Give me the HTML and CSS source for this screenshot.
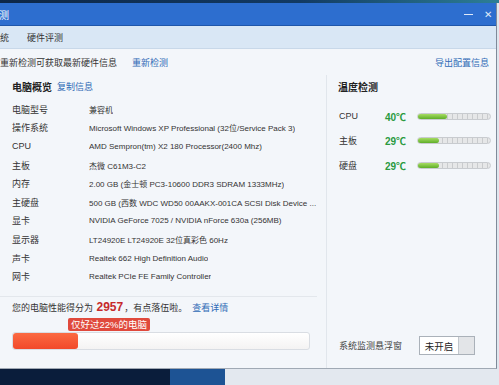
FILE: index.html
```html
<!DOCTYPE html>
<html lang="zh-CN">
<head>
    <meta charset="UTF-8">
    <title>硬件检测</title>
    <link rel="stylesheet" href="styles.css">
</head>
<body>
    <div class="screen">
        <div class="desktop-top"></div>
        <div class="window">
            <div class="titlebar">
                <span class="title">测</span>
                <span class="controls"><span class="min"></span><span class="close">✕</span></span>
            </div>
            <div class="menubar">
                <span class="tab">统</span>
                <span class="tab">硬件评测</span>
            </div>
            <div class="content">
                <div class="toolbar">
                    <span>重新检测可获取最新硬件信息</span>
                    <a class="link">重新检测</a>
                    <a class="link export">导出配置信息</a>
                </div>
                <div class="panels">
                    <div class="overview">
                        <div class="heading"><b>电脑概览</b><a class="link">复制信息</a></div>
                        <div class="spec">
                            <div class="row"><span class="label">电脑型号</span><span class="value">兼容机</span></div>
                            <div class="row"><span class="label">操作系统</span><span class="value">Microsoft Windows XP Professional (32位/Service Pack 3)</span></div>
                            <div class="row"><span class="label">CPU</span><span class="value">AMD Sempron(tm) X2 180 Processor(2400 Mhz)</span></div>
                            <div class="row"><span class="label">主板</span><span class="value">杰微 C61M3-C2</span></div>
                            <div class="row"><span class="label">内存</span><span class="value">2.00 GB (金士顿 PC3-10600 DDR3 SDRAM 1333MHz)</span></div>
                            <div class="row"><span class="label">主硬盘</span><span class="value">500 GB (西数 WDC WD50 00AAKX-001CA SCSI Disk Device ...</span></div>
                            <div class="row"><span class="label">显卡</span><span class="value">NVIDIA GeForce 7025 / NVIDIA nForce 630a (256MB)</span></div>
                            <div class="row"><span class="label">显示器</span><span class="value">LT24920E LT24920E 32位真彩色 60Hz</span></div>
                            <div class="row"><span class="label">声卡</span><span class="value">Realtek 662 High Definition Audio</span></div>
                            <div class="row"><span class="label">网卡</span><span class="value">Realtek PCIe FE Family Controller</span></div>
                        </div>
                        <div class="score-box">
                            <div class="score">您的电脑性能得分为 <b class="points">2957</b>，有点落伍啦。<a class="link">查看详情</a></div>
                            <div class="badge">仅好过22%的电脑</div>
                            <div class="meter"><div class="meter-fill" style="width: 22%"></div></div>
                        </div>
                    </div>
                    <div class="temps">
                        <div class="heading"><b>温度检测</b></div>
                        <div class="temp-row">
                            <span class="temp-label">CPU</span>
                            <span class="temp-value">40℃</span>
                            <span class="temp-bar"><span class="temp-fill" style="width: 40%"></span></span>
                        </div>
                        <div class="temp-row">
                            <span class="temp-label">主板</span>
                            <span class="temp-value">29℃</span>
                            <span class="temp-bar"><span class="temp-fill" style="width: 29%"></span></span>
                        </div>
                        <div class="temp-row">
                            <span class="temp-label">硬盘</span>
                            <span class="temp-value">29℃</span>
                            <span class="temp-bar"><span class="temp-fill" style="width: 29%"></span></span>
                        </div>
                        <div class="monitor">
                            <span>系统监测悬浮窗</span>
                            <span class="toggle"><span class="toggle-text">未开启</span><span class="toggle-knob"></span></span>
                        </div>
                    </div>
                </div>
            </div>
        </div>
        <div class="taskbar"></div>
    </div>
</body>
</html>
```

FILE: styles.css
```css
body {
    margin: 0;
    background: #dfe6ee;
    font-family: "Liberation Sans", "Noto Sans CJK SC", sans-serif;
    font-size: 9px;
    color: #333;
}

.screen {
    width: 499px;
    height: 385px;
    overflow: hidden;
    display: flex;
    flex-direction: column;
}

.desktop-top {
    height: 3px;
    background: linear-gradient(90deg, #0d2748 0%, #123a63 60%, #2d7f96 100%);
}

.window {
    width: 496px;
    height: 365px;
    border-right: 1px solid #7f8a99;
    border-bottom: 1px solid #a0a9b4;
    background: #f3f6fa;
    display: flex;
    flex-direction: column;
}

.titlebar {
    height: 22px;
    background: #2d6ecf;
    border-bottom: 1px solid #1f56aa;
    color: white;
    display: flex;
    align-items: center;
    justify-content: space-between;
    font-size: 10px;
}

.title {
    margin-left: -1px;
}

.controls {
    display: flex;
    align-items: center;
    gap: 11px;
    margin-right: 4px;
    color: #dfe9f8;
}

.min {
    width: 9px;
    height: 1px;
    background: #dfe9f8;
}

.close {
    font-size: 10px;
}

.menubar {
    height: 22px;
    background: #d9e7f5;
    border-bottom: 1px solid #c8d8e9;
    display: flex;
    align-items: center;
    gap: 18px;
}

.content {
    flex: 1;
    display: flex;
    flex-direction: column;
}

.toolbar {
    height: 26px;
    display: flex;
    align-items: center;
}

.toolbar .link {
    margin-left: 15px;
}

.toolbar .export {
    margin-left: auto;
    margin-right: 7px;
}

.link {
    color: #2f6ab6;
}

.panels {
    flex: 1;
    display: flex;
}

.overview {
    width: 326px;
    border-right: 1px solid #e1e6ec;
    display: flex;
    flex-direction: column;
}

.heading {
    height: 22px;
    display: flex;
    align-items: center;
    gap: 5px;
    padding-left: 12px;
}

.heading b {
    font-size: 10px;
    color: #222;
}

.spec {
    margin-top: 3px;
    padding-left: 12px;
}

.row {
    height: 18.6px;
    display: flex;
    align-items: center;
}

.label {
    width: 77px;
    flex-shrink: 0;
}

.value {
    font-size: 8px;
    white-space: nowrap;
    overflow: hidden;
}

.score-box {
    margin-top: 10px;
    margin-right: 9px;
    border-top: 1px solid #e3e7ec;
    padding-left: 12px;
}

.score {
    height: 21px;
    display: flex;
    align-items: center;
    white-space: pre;
}

.points {
    color: #c62a2c;
    font-size: 12px;
    margin: 0 1px;
}

.score .link {
    margin-left: 5px;
}

.badge {
    display: inline-block;
    margin-left: 56px;
    height: 13px;
    line-height: 13px;
    padding: 0 3px;
    background: #e0493c;
    color: white;
    border-radius: 2px;
    font-size: 9.5px;
}

.meter {
    margin-top: 1px;
    width: 296px;
    height: 16px;
    border: 1px solid #d9dde3;
    border-radius: 3px;
    background: linear-gradient(#ffffff, #f4f3f3);
}

.meter-fill {
    height: 100%;
    border-radius: 3px;
    background: linear-gradient(#fb6a42, #f2492a);
}

.temps {
    flex: 1;
    display: flex;
    flex-direction: column;
}

.temps .heading {
    padding-left: 11px;
}

.temp-row {
    height: 24.5px;
    display: flex;
    align-items: center;
    padding-left: 12px;
}

.heading + .temp-row {
    margin-top: 7px;
}

.temp-label {
    width: 46px;
}

.temp-value {
    width: 32px;
    color: #2a9a3f;
    font-weight: bold;
    font-size: 10px;
}

.temp-bar {
    width: 72px;
    height: 5px;
    border: 1px solid #c8cbcf;
    border-radius: 4px;
    background: repeating-linear-gradient(90deg, #e6e7e8 0 4px, #c9cbcd 4px 5px);
    display: flex;
}

.temp-fill {
    border-radius: 4px;
    background: linear-gradient(#a7dc63, #5eae28);
}

.monitor {
    margin-top: auto;
    margin-bottom: 13px;
    padding-left: 12px;
    display: flex;
    align-items: center;
    gap: 17px;
    color: #444;
}

.toggle {
    display: flex;
    height: 17px;
    border: 1px solid #aab1b9;
    background: white;
}

.toggle-text {
    width: 38px;
    display: flex;
    align-items: center;
    justify-content: center;
    border-right: 1px solid #c2c7cd;
    font-size: 9.5px;
    color: #222;
}

.toggle-knob {
    width: 15px;
    background: #e3e5e8;
}

.taskbar {
    flex: 1;
    background: linear-gradient(90deg, #0a1d3b 0 170px, #1d5394 170px 225px, #e3e8ef 225px);
}
```
